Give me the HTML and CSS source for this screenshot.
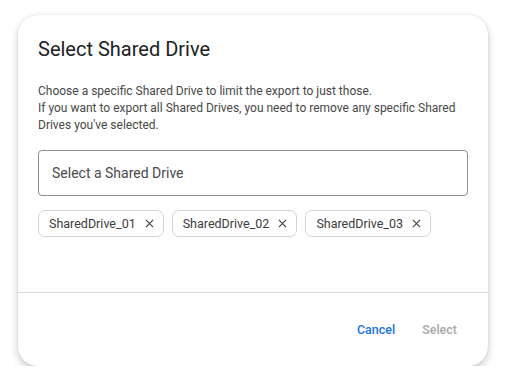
FILE: index.html
```html
<!DOCTYPE html>
<html lang="en">
<head>
<meta charset="utf-8">
<title>Select Shared Drive</title>
<link rel="stylesheet" href="styles.css">
</head>
<body>
<div class="dialog">
  <div class="content">
    <h1 class="title">Select Shared Drive</h1>
    <p class="desc">Choose a specific Shared Drive to limit the export to just those.<br>If you want to export all Shared Drives, you need to remove any specific Shared Drives you've selected.</p>
    <div class="field">Select a Shared Drive</div>
    <div class="chips">
      <span class="chip">SharedDrive_01<svg class="x" viewBox="0 0 10 10"><path d="M1 1L9 9M9 1L1 9"/></svg></span>
      <span class="chip">SharedDrive_02<svg class="x" viewBox="0 0 10 10"><path d="M1 1L9 9M9 1L1 9"/></svg></span>
      <span class="chip">SharedDrive_03<svg class="x" viewBox="0 0 10 10"><path d="M1 1L9 9M9 1L1 9"/></svg></span>
    </div>
  </div>
  <div class="footer">
    <button class="btn btn-cancel">Cancel</button>
    <button class="btn btn-select">Select</button>
  </div>
</div>
</body>
</html>
```
FILE: styles.css
```css
html, body {
  margin: 0;
  padding: 0;
  background: #ffffff;
}
body {
  font-family: Roboto, "Liberation Sans", sans-serif;
  padding: 15px 0 0 18px;
}
.dialog {
  width: 470px;
  height: 351px;
  box-sizing: border-box;
  background: #fff;
  border-radius: 20px;
  box-shadow: 0 4px 9px rgba(0,0,0,0.2), 0 0 2px rgba(0,0,0,0.12);
  display: flex;
  flex-direction: column;
}
.content {
  padding: 22px 20px 0 20px;
  height: 278px;
  box-sizing: border-box;
  border-bottom: 1px solid #dcdcdc;
}
.title {
  margin: 0;
  font-size: 20px;
  line-height: 24px;
  font-weight: 400;
  color: #202124;
}
.desc {
  margin: 22px 0 0 0;
  font-size: 12px;
  line-height: 17px;
  color: #474747;
}
.field {
  margin-top: 16px;
  height: 46px;
  box-sizing: border-box;
  border: 1px solid #8f8f8f;
  border-radius: 4px;
  padding: 0 13px;
  display: flex;
  align-items: center;
  font-size: 14px;
  color: #4a4a4a;
}
.chips {
  margin-top: 14px;
  display: flex;
  gap: 8px;
}
.chip {
  height: 27px;
  box-sizing: border-box;
  border: 1px solid #d3d3d3;
  border-radius: 7px;
  padding: 0 9px 0 10px;
  display: inline-flex;
  align-items: center;
  gap: 9px;
  font-size: 12.5px;
  color: #3c3c3c;
}
.x {
  width: 9px;
  height: 9px;
  stroke: #444;
  stroke-width: 1.3;
  fill: none;
}
.footer {
  flex: 1;
  display: flex;
  justify-content: flex-end;
  align-items: center;
  padding-right: 19px;
  gap: 3px;
}
.btn {
  border: none;
  background: none;
  font-family: Roboto, "Liberation Sans", sans-serif;
  font-size: 12.5px;
  font-weight: 500;
  padding: 8px 12px;
}
.btn-cancel { color: #1a73e8; }
.btn-select { color: #a8a8a8; }
```
